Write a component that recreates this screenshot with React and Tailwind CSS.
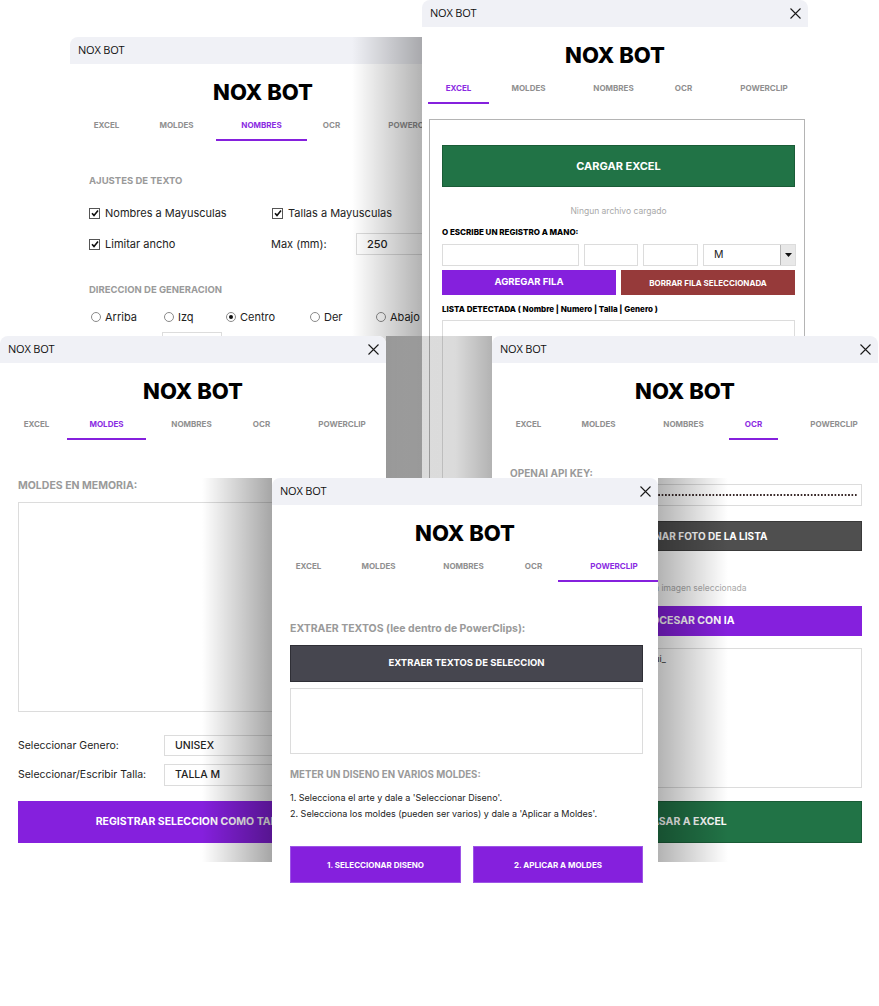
import React from "react"

// Tab strip config (cell widths measured from the app)
const TABS = [
  { name: "EXCEL", cell: "w-[61px]" },
  { name: "MOLDES", cell: "w-[79px]" },
  { name: "NOMBRES", cell: "w-[91px]" },
  { name: "OCR", cell: "w-[49px]" },
  { name: "POWERCLIP", cell: "w-[100px] pl-[12px]" },
]

function CloseIcon() {
  return (
    <svg width="11" height="11" viewBox="0 0 11 11">
      <path d="M0.5 0.5L10.5 10.5M10.5 0.5L0.5 10.5" stroke="#1a1a1a" strokeWidth="1.1" />
    </svg>
  )
}

function Tabs({ active }) {
  return (
    <div className="flex pl-[6px] mt-[9px] h-[26px] shrink-0">
      {TABS.map((tab) => (
        <div
          key={tab.name}
          className={`${tab.cell} shrink-0 h-full pt-[4px] text-center text-[8px] leading-[12px] font-bold ${
            tab.name === active ? "text-[#8a2be2] border-b-2 border-[#8520dd]" : "text-[#8f8f8f]"
          }`}
        >
          {tab.name}
        </div>
      ))}
    </div>
  )
}

function Window({ pos, active, children, shades }) {
  return (
    <div className={`absolute ${pos} w-[386px] bg-white rounded-lg overflow-hidden flex flex-col`}>
      <div className="h-[27px] shrink-0 bg-[#f0f1f6] flex items-center justify-between pl-[8px] pr-[7px]">
        <span className="text-[11px] text-[#111] font-['Open_Sans',sans-serif] tracking-[-0.2px]">NOX BOT</span>
        <CloseIcon />
      </div>
      <h1 className="mt-[14px] text-center text-[22px] leading-[28px] font-extrabold text-black">
        NOX BOT
      </h1>
      <Tabs active={active} />
      {children}
      {shades}
    </div>
  )
}

function Check() {
  return (
    <span className="w-[11px] h-[11px] shrink-0 border border-[#555] bg-white flex items-center justify-center">
      <svg width="8" height="8" viewBox="0 0 8 8">
        <path d="M1 4.2L3 6.4L7 1.4" stroke="#111" strokeWidth="1.6" fill="none" />
      </svg>
    </span>
  )
}

function Radio({ on }) {
  return (
    <span className="w-[10px] h-[10px] shrink-0 rounded-full border border-[#8a8a8a] bg-white flex items-center justify-center">
      {on && <span className="w-[4px] h-[4px] rounded-full bg-[#111]" />}
    </span>
  )
}

function SectionLabel({ children, className = "text-[10px]" }) {
  return <p className={`leading-[14px] font-bold text-[#9a9a9a] ${className}`}>{children}</p>
}

// Back window: NOMBRES tab
function NombresWindow() {
  const radios = [
    { label: "Arriba", cell: "w-[73px]" },
    { label: "Izq", cell: "w-[62px]" },
    { label: "Centro", cell: "w-[84px]", on: true },
    { label: "Der", cell: "w-[66px]" },
    { label: "Abajo", cell: "w-[70px]" },
  ]
  return (
    <Window
      pos="left-[70px] top-[37px] h-[526px]"
      active="NOMBRES"
      shades={
        <>
          <div className="absolute left-[282px] top-0 w-[70px] h-full bg-linear-to-r from-transparent to-black/30 pointer-events-none" />
          <div className="absolute left-[316px] top-[299px] w-[70px] bottom-0 bg-linear-to-r from-black/30 to-transparent pointer-events-none" />
        </>
      }
    >
      <div className="px-[19px] flex flex-col text-[#222]">
        <SectionLabel className="mt-[33px] text-[9.5px]">AJUSTES DE TEXTO</SectionLabel>
        <div className="mt-[18px] flex items-center h-[14px] text-[11px]">
          <div className="w-[183px] shrink-0 flex items-center gap-[5px]">
            <Check />
            <span>Nombres a Mayusculas</span>
          </div>
          <div className="shrink-0 flex items-center gap-[5px]">
            <Check />
            <span>Tallas a Mayusculas</span>
          </div>
        </div>
        <div className="mt-[13px] flex items-center h-[22px] text-[11px]">
          <div className="w-[182px] shrink-0 flex items-center gap-[5px]">
            <Check />
            <span>Limitar ancho</span>
          </div>
          <span className="w-[85px] shrink-0">Max (mm):</span>
          <div className="w-[120px] shrink-0 h-[22px] border border-[#dcdcdc] pl-[10px] flex items-center text-[11px] font-medium">
            250
          </div>
        </div>
        <SectionLabel className="mt-[28px] text-[9.5px]">DIRECCION DE GENERACION</SectionLabel>
        <div className="mt-[13px] flex items-center h-[14px] pl-[2px] text-[11px]">
          {radios.map((r) => (
            <div key={r.label} className={`${r.cell} shrink-0 flex items-center gap-[4px]`}>
              <Radio on={r.on} />
              <span>{r.label}</span>
            </div>
          ))}
        </div>
        <div className="mt-[8px] ml-[73px] w-[60px] h-[22px] border border-[#dcdcdc]" />
      </div>
    </Window>
  )
}

// Back window: EXCEL tab
function ExcelWindow() {
  return (
    <Window
      pos="left-[422px] top-0 h-[526px]"
      active="EXCEL"
      shades={
        <>
          <div className="absolute left-0 top-[336px] w-[70px] bottom-0 bg-linear-to-r from-transparent to-black/30 pointer-events-none" />
          <div className="absolute left-[-36px] top-[336px] w-[70px] bottom-0 bg-linear-to-r from-black/30 to-transparent pointer-events-none" />
        </>
      }
    >
      <div className="mt-[15px] ml-[7px] w-[376px] flex-1 mb-[8px] border border-[#b4b4b4] pt-[25px] pl-[12px] flex flex-col">
        <button className="w-[353px] h-[42px] bg-[#217346] border border-[#1a5c37] text-white text-[11px] font-bold">
          CARGAR EXCEL
        </button>
        <p className="mt-[18px] w-[353px] text-center text-[8.5px] leading-[12px] text-[#a8a8a8]">
          Ningun archivo cargado
        </p>
        <p className="mt-[10px] text-[8px] leading-[10px] font-extrabold text-black">O ESCRIBE UN REGISTRO A MANO:</p>
        <div className="mt-[7px] flex gap-[5px] h-[22px]">
          <div className="w-[137px] border border-[#dcdcdc]" />
          <div className="w-[54px] border border-[#dcdcdc]" />
          <div className="w-[55px] border border-[#dcdcdc]" />
          <div className="w-[93px] border border-[#dcdcdc] flex items-center justify-between">
            <span className="pl-[10px] text-[10.5px] text-[#222]">M</span>
            <span className="w-[15px] h-full bg-[#e8e8e8] border-l border-[#b8b8b8] flex items-center justify-center">
              <svg width="7" height="4" viewBox="0 0 7 4">
                <path d="M0 0H7L3.5 4Z" fill="#111" />
              </svg>
            </span>
          </div>
        </div>
        <div className="mt-[4px] flex gap-[5px] h-[25px]">
          <button className="w-[174px] bg-[#8520dd] text-white text-[9.5px] font-bold">AGREGAR FILA</button>
          <button className="w-[174px] bg-[#963a3a] text-white text-[8px] font-bold">BORRAR FILA SELECCIONADA</button>
        </div>
        <p className="mt-[9px] text-[8px] leading-[10px] font-extrabold text-black">
          LISTA DETECTADA ( Nombre | Numero | Talla | Genero )
        </p>
        <div className="mt-[6px] w-[353px] h-[160px] border border-[#dcdcdc]" />
      </div>
    </Window>
  )
}

// Front-left window: MOLDES tab
function MoldesWindow() {
  return (
    <Window
      pos="left-0 top-[336px] h-[526px]"
      active="MOLDES"
      shades={
        <div className="absolute left-[202px] top-[142px] w-[70px] bottom-0 bg-linear-to-r from-transparent to-black/35 pointer-events-none" />
      }
    >
      <div className="pl-[18px] pr-[18px] flex flex-col text-[#222]">
        <SectionLabel className="mt-[39px] text-[10.5px]">MOLDES EN MEMORIA:</SectionLabel>
        <div className="mt-[9px] h-[210px] border border-[#dcdcdc]" />
        <div className="mt-[23px] flex items-center h-[21px] text-[10.5px]">
          <span className="w-[146px] shrink-0">Seleccionar Genero:</span>
          <div className="flex-1 h-full border border-[#dcdcdc] pl-[10px] flex items-center font-medium">UNISEX</div>
        </div>
        <div className="mt-[8px] flex items-center h-[22px] text-[10.5px]">
          <span className="w-[146px] shrink-0">Seleccionar/Escribir Talla:</span>
          <div className="flex-1 h-full border border-[#dcdcdc] pl-[10px] flex items-center font-medium">TALLA M</div>
        </div>
        <button className="mt-[15px] h-[42px] bg-[#8520dd] text-white text-[10.5px] font-bold">
          REGISTRAR SELECCION COMO TALLA
        </button>
      </div>
    </Window>
  )
}

// Front-right window: OCR tab
function OcrWindow() {
  return (
    <Window
      pos="left-[492px] top-[336px] h-[526px]"
      active="OCR"
      shades={
        <div className="absolute left-[166px] top-[142px] w-[70px] bottom-0 bg-linear-to-r from-black/30 to-transparent pointer-events-none" />
      }
    >
      <div className="pl-[18px] pr-[16px] flex flex-col text-[#222]">
        <SectionLabel className="mt-[26px] text-[10px]">OPENAI API KEY:</SectionLabel>
        <div className="mt-[4px] h-[22px] border border-[#dcdcdc] px-[4px] flex items-center">
          <span className="w-full h-[4px] bg-[radial-gradient(circle,#3a2a2a_1px,transparent_1.3px)] bg-[length:3.4px_4px]" />
        </div>
        <button className="mt-[15px] h-[30px] bg-[#4f4f4f] border border-[#3a3a3a] text-white text-[10px] font-bold">
          SELECCIONAR FOTO DE LA LISTA
        </button>
        <p className="mt-[31px] text-center text-[8.5px] leading-[12px] text-[#a8a8a8]">Ninguna imagen seleccionada</p>
        <button className="mt-[12px] h-[30px] bg-[#8520dd] text-white text-[10.5px] font-bold">PROCESAR CON IA</button>
        <div className="mt-[12px] h-[140px] border border-[#dcdcdc] px-[4px] pt-[4px] text-[9px] leading-[12px] text-[#333]">
          Los datos de la foto aparecen aqui_
        </div>
        <button className="mt-[13px] h-[42px] bg-[#217346] border border-[#1a5c37] text-white text-[10.5px] font-bold">
          PASAR A EXCEL
        </button>
      </div>
    </Window>
  )
}

// Top window: POWERCLIP tab
function PowerclipWindow() {
  return (
    <Window pos="left-[272px] top-[478px] h-[527px]" active="POWERCLIP">
      <div className="pl-[18px] pr-[15px] flex flex-col text-[#222]">
        <SectionLabel className="mt-[40px] text-[10.5px]">EXTRAER TEXTOS (lee dentro de PowerClips):</SectionLabel>
        <button className="mt-[9px] h-[37px] bg-[#46464f] border border-[#2f2f36] text-white text-[9.5px] font-bold">
          EXTRAER TEXTOS DE SELECCION
        </button>
        <div className="mt-[6px] h-[66px] border border-[#dcdcdc]" />
        <SectionLabel className="mt-[14px] text-[9.7px]">METER UN DISENO EN VARIOS MOLDES:</SectionLabel>
        <div className="mt-[8px] text-[9px] leading-[16px] text-[#222]">
          <p>1. Selecciona el arte y dale a 'Seleccionar Diseno'.</p>
          <p>2. Selecciona los moldes (pueden ser varios) y dale a 'Aplicar a Moldes'.</p>
        </div>
        <div className="mt-[24px] flex gap-[12px] h-[37px]">
          <button className="w-[171px] bg-[#8520dd] border border-[#9d55e6] text-white text-[8px] font-bold">
            1. SELECCIONAR DISENO
          </button>
          <button className="w-[170px] bg-[#8520dd] border border-[#9d55e6] text-white text-[8px] font-bold">
            2. APLICAR A MOLDES
          </button>
        </div>
      </div>
    </Window>
  )
}

export default function App() {
  return (
    <div className="relative w-[879px] h-[1006px] bg-white overflow-hidden font-['Inter',sans-serif]">
      <NombresWindow />
      <ExcelWindow />
      <MoldesWindow />
      <OcrWindow />
      <PowerclipWindow />
    </div>
  )
}
